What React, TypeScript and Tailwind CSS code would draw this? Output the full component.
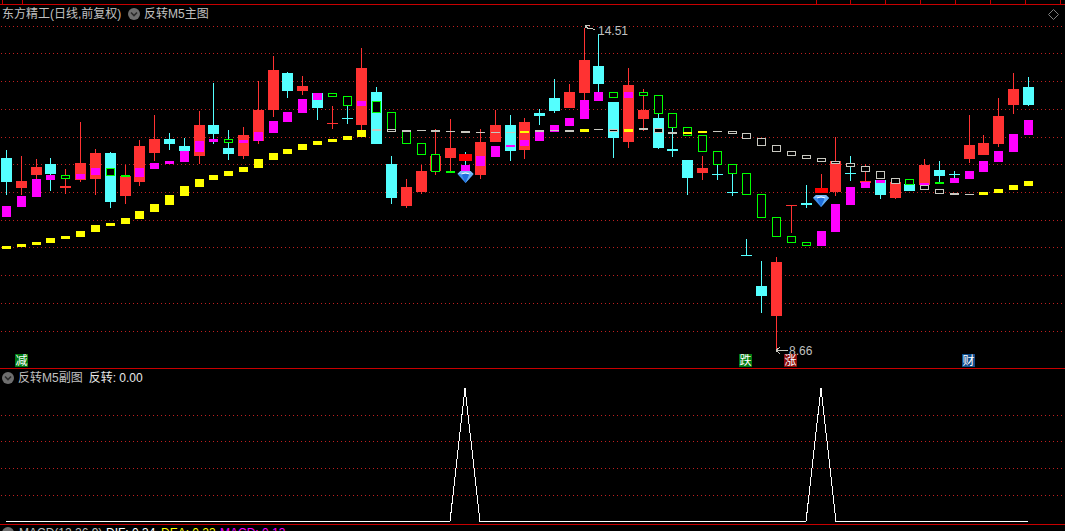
type Span = [number, number];

type Bar = {
  x: number;
  c: "r" | "c" | "n";
  w?: Span;
  b?: Span;
  m?: Span; // magenta block
  g?: Span; // green box
  y?: Span; // yellow dash
  s?: Span; // grey dash
  h?: Span; // grey box
  p?: Span; // pure red block
};

const bars: Bar[] = [
  { x: 6.5, c: "c", w: [150, 195], b: [158, 182], m: [206, 217], y: [246, 249] },
  { x: 21.5, c: "r", w: [156, 195], b: [181, 188], m: [196, 207], y: [244, 247] },
  { x: 36.5, c: "r", w: [159, 179], b: [167, 175], m: [179, 197], y: [242, 245] },
  { x: 50.5, c: "c", w: [158, 191], b: [164, 174], m: [175, 180], y: [238, 243] },
  { x: 65.5, c: "r", w: [169, 194], b: [186, 188], g: [175, 179], y: [236, 239] },
  { x: 80.5, c: "r", w: [122, 182], b: [163, 180], m: [174, 179], y: [231, 237] },
  { x: 95.5, c: "r", w: [149, 195], b: [153, 179], m: [168, 175], y: [225, 232] },
  { x: 110.5, c: "c", w: [152, 208], b: [153, 202], g: [168, 176], y: [223, 226] },
  { x: 125.5, c: "r", w: [165, 204], b: [176, 196], g: [175, 177], y: [218, 224] },
  { x: 139.5, c: "r", w: [140, 186], b: [146, 182], m: [168, 177], y: [211, 219] },
  { x: 154.5, c: "r", w: [115, 161], b: [139, 153], m: [163, 169], y: [204, 212] },
  { x: 169.5, c: "c", w: [133, 150], b: [139, 144], m: [161, 164], y: [195, 205] },
  { x: 184.5, c: "c", w: [138, 162], b: [146, 151], m: [151, 162], y: [186, 196] },
  { x: 199.5, c: "r", w: [111, 164], b: [125, 156], m: [141, 152], y: [179, 187] },
  { x: 213.5, c: "c", w: [83, 144], b: [125, 134], m: [139, 142], y: [175, 180] },
  { x: 228.5, c: "c", w: [130, 160], b: [148, 154], g: [139, 143], y: [171, 176] },
  { x: 243.5, c: "r", w: [127, 159], b: [135, 156], m: [140, 143], y: [167, 172] },
  { x: 258.5, c: "r", w: [81, 144], b: [110, 141], m: [132, 141], y: [159, 168] },
  { x: 273.5, c: "r", w: [56, 117], b: [70, 110], m: [121, 133], y: [153, 160] },
  { x: 287.5, c: "c", w: [72, 98], b: [73, 91], m: [112, 122], y: [149, 154] },
  { x: 302.5, c: "r", w: [76, 95], b: [86, 91], m: [99, 113], y: [144, 150] },
  { x: 317.5, c: "c", w: [93, 120], b: [93, 108], m: [93, 100], y: [141, 145] },
  { x: 332.5, c: "r", w: [106, 129], b: [123, 124], g: [93, 97], y: [139, 142] },
  { x: 347.5, c: "c", w: [96, 124], b: [118, 119], g: [96, 106], y: [136, 140] },
  { x: 361.5, c: "r", w: [48, 130], b: [68, 125], m: [101, 106], y: [130, 137] },
  { x: 376.5, c: "c", w: [87, 144], b: [92, 144], g: [101, 113], s: [129, 131] },
  { x: 391.5, c: "c", w: [156, 204], b: [164, 198], g: [112, 132], h: [129, 132] },
  { x: 406.5, c: "r", w: [179, 208], b: [187, 206], g: [131, 144], s: [130, 132] },
  { x: 421.5, c: "r", w: [165, 194], b: [171, 192], g: [143, 155], s: [130, 131] },
  { x: 435.5, c: "r", w: [129, 175], b: [156, 171], g: [154, 172], s: [130, 132] },
  { x: 450.5, c: "r", w: [119, 172], b: [148, 158], g: [171, 173], s: [131, 132] },
  { x: 465.5, c: "c", w: [152, 171], p: [154, 161], m: [165, 171], s: [131, 133] },
  { x: 480.5, c: "r", w: [129, 179], b: [142, 175], m: [156, 166], s: [132, 133] },
  { x: 495.5, c: "r", w: [110, 142], b: [125, 142], m: [146, 157], s: [132, 133] },
  { x: 510.5, c: "c", w: [115, 161], b: [125, 151], m: [145, 147], s: [132, 133] },
  { x: 524.5, c: "r", w: [118, 159], b: [122, 150], m: [140, 146], y: [131, 133] },
  { x: 539.5, c: "c", w: [109, 125], b: [113, 116], m: [132, 141], s: [130, 132] },
  { x: 554.5, c: "c", w: [79, 113], b: [98, 111], m: [125, 132], s: [130, 131] },
  { x: 569.5, c: "r", w: [84, 108], b: [92, 108], m: [118, 126], s: [130, 132] },
  { x: 584.5, c: "r", w: [28, 100], b: [60, 93], m: [100, 119], y: [129, 132] },
  { x: 598.5, c: "c", w: [34, 92], b: [66, 84], m: [92, 101], s: [129, 130] },
  { x: 613.5, c: "c", w: [102, 158], b: [102, 138], g: [92, 98], h: [129, 132] },
  { x: 628.5, c: "r", w: [68, 148], b: [85, 142], m: [92, 98], y: [129, 132] },
  { x: 643.5, c: "r", w: [89, 131], b: [110, 119], g: [92, 96], s: [128, 130] },
  { x: 658.5, c: "c", w: [114, 149], b: [118, 148], g: [95, 114], h: [128, 133] },
  { x: 672.5, c: "c", w: [128, 157], b: [149, 151], g: [113, 128], s: [132, 134] },
  { x: 687.5, c: "c", w: [160, 195], b: [160, 178], g: [127, 136], y: [132, 134] },
  { x: 702.5, c: "r", w: [156, 180], b: [168, 173], g: [135, 152], y: [131, 133] },
  { x: 717.5, c: "c", w: [165, 180], b: [174, 175], g: [151, 165], s: [131, 132] },
  { x: 732.5, c: "c", w: [174, 196], b: [192, 193], g: [164, 174], h: [131, 134] },
  { x: 746.5, c: "c", w: [239, 256], b: [255, 256], g: [173, 195], h: [133, 139] },
  { x: 761.5, c: "c", w: [261, 313], b: [286, 296], g: [194, 218], h: [138, 146] },
  { x: 776.5, c: "r", w: [257, 350], b: [262, 316], g: [217, 237], h: [145, 152] },
  { x: 791.5, c: "r", w: [205, 233], b: [205, 206], g: [236, 243], h: [151, 156] },
  { x: 806.5, c: "c", w: [185, 208], b: [203, 205], g: [242, 246], h: [155, 159] },
  { x: 821.5, c: "r", w: [174, 188], m: [231, 246], p: [188, 193], h: [158, 162] },
  { x: 835.5, c: "r", w: [137, 196], b: [161, 192], m: [204, 232], h: [161, 164] },
  { x: 850.5, c: "c", w: [156, 181], b: [173, 174], m: [187, 205], h: [163, 167] },
  { x: 865.5, c: "r", w: [164, 183], b: [181, 183], m: [182, 188], h: [166, 172] },
  { x: 880.5, c: "c", w: [180, 199], b: [180, 195], m: [180, 183], h: [171, 179] },
  { x: 895.5, c: "r", w: [182, 199], b: [182, 198], h: [178, 184] },
  { x: 909.5, c: "c", b: [184, 191], g: [179, 185] },
  { x: 924.5, c: "r", w: [159, 185], b: [165, 185], m: [183, 185], h: [185, 190] },
  { x: 939.5, c: "c", w: [161, 182], b: [170, 176], g: [182, 184], h: [189, 194] },
  { x: 954.5, c: "c", w: [171, 178], b: [174, 175], m: [178, 183], s: [193, 195] },
  { x: 969.5, c: "r", w: [115, 163], b: [145, 159], m: [171, 179], s: [194, 195] },
  { x: 983.5, c: "r", w: [135, 155], b: [143, 155], m: [161, 172], y: [192, 195] },
  { x: 998.5, c: "r", w: [98, 147], b: [116, 144], m: [151, 162], y: [189, 193] },
  { x: 1013.5, c: "r", w: [73, 114], b: [89, 105], m: [134, 152], y: [185, 190] },
  { x: 1028.5, c: "c", w: [77, 106], b: [87, 105], m: [120, 135], y: [181, 186] },
];

const mainGrid = [26, 53, 81, 109, 137, 164, 192, 220, 247, 275, 303, 331];
const subGrid = [415, 441, 468, 495];
const rulerTicks = [816, 850, 885, 920, 955, 990, 1025, 1060];

const RED = "#ff3232";
const CYAN = "#54ffff";
const GREY = "#c8c8c0";

function Block({ x, span, fill, half = 4.5 }: { x: number; span: Span; fill: string; half?: number }) {
  return <rect x={x - half} y={span[0]} width={half * 2} height={span[1] - span[0]} fill={fill} />;
}

function Box({ x, span, stroke }: { x: number; span: Span; stroke: string }) {
  if (span[1] - span[0] <= 2) return <Block x={x} span={span} fill={stroke} />;
  return (
    <rect
      x={x - 4}
      y={span[0] + 0.5}
      width={8}
      height={span[1] - span[0] - 1}
      fill="#000"
      stroke={stroke}
      strokeWidth={1}
    />
  );
}

function Gem({ x, y }: { x: number; y: number }) {
  return (
    <g transform={`translate(${x} ${y})`} shapeRendering="auto">
      <polygon points="0,3 3,0 13,0 16,3 8,12" fill="#3d8fec" />
      <polygon points="4,3 12,3 8,12" fill="#1f6fdc" />
      <polygon points="12,3 16,3 8,12" fill="#63aef5" />
      <polygon points="3,0 13,0 16,3 0,3" fill="#7cbcf7" />
      <path d="M4 3 Q8 0.6 12 3" fill="none" stroke="#fff" strokeWidth={1} />
    </g>
  );
}

function Toggle() {
  return (
    <svg width="12" height="12" viewBox="0 0 12 12" className="shrink-0">
      <circle cx="6" cy="6" r="6" fill="#6e6e6e" />
      <path d="M3 4.5 L6 7.5 L9 4.5" fill="none" stroke="#2a2a2a" strokeWidth="1.6" />
    </svg>
  );
}

function Badge({ left, bg, text }: { left: string; bg: string; text: string }) {
  return (
    <span className={`absolute top-[349px] ${left} ${bg} w-[13px] h-[13px] flex items-center justify-center text-[12px] leading-none text-white`}>
      {text}
    </span>
  );
}

export default function App() {
  return (
    <div className="w-[1065px] h-[531px] bg-black overflow-hidden flex flex-col font-['Liberation_Sans','Noto_Sans_CJK_SC',sans-serif] text-[12px] text-[#c0c0c0]">
      {/* top ruler */}
      <div className="h-[5px] shrink-0 border-b border-[#c80000] relative">
        <div className="absolute left-[2px] w-[21px] h-[4px] border-x border-[#c80000]" />
        {rulerTicks.map((t) => (
          <svg key={t} width="1" height="4" className="absolute top-0" style={{ left: t }}>
            <rect width="1" height="4" fill="#c80000" />
          </svg>
        ))}
      </div>

      {/* main chart */}
      <div className="h-[364px] shrink-0 border-b border-[#c80000] relative">
        <svg width="1065" height="363" viewBox="0 5 1065 363" shapeRendering="crispEdges" className="block">
          {mainGrid.map((y) => (
            <line key={y} x1="1" x2="1065" y1={y + 0.5} y2={y + 0.5} stroke="#c02020" strokeDasharray="1 3" />
          ))}
          {bars.map((d) => {
            const col = d.c === "r" ? RED : CYAN;
            return (
              <g key={d.x}>
                {d.w && <rect x={Math.floor(d.x)} y={d.w[0]} width="1" height={d.w[1] - d.w[0]} fill={col} />}
                {d.b && <Block x={d.x} span={d.b} fill={col} half={5.5} />}
                {d.p && <Block x={d.x} span={d.p} fill="#ff0000" half={6.5} />}
                {d.m && <Block x={d.x} span={d.m} fill="#ff00ff" />}
                {d.g && <Box x={d.x} span={d.g} stroke="#00ff00" />}
                {d.y && <Block x={d.x} span={d.y} fill="#ffff00" />}
                {d.s && <Block x={d.x} span={d.s} fill={GREY} />}
                {d.h && <Box x={d.x} span={d.h} stroke={GREY} />}
              </g>
            );
          })}
          <Gem x={457.5} y={171} />
          <Gem x={813} y={195} />
          {/* high / low arrows */}
          <path d="M590 25 L585 25 L585 28 M585 25 L588 29 L591 28 L595 30" fill="none" stroke={GREY} />
          <path d="M776 350.5 H788 M776 350.5 L780 347 M776 350.5 L780 354" fill="none" stroke={GREY} />
          {/* corner diamond */}
          <polygon points="1053.5,9.5 1058.5,14.5 1053.5,19.5 1048.5,14.5" fill="none" stroke="#808080" shapeRendering="auto" />
        </svg>

        <div className="absolute top-px left-[2px] h-4 flex items-center">
          <span className="w-[120px] whitespace-nowrap">东方精工(日线,前复权)</span>
          <span className="ml-[6px] mr-[4px]">
            <Toggle />
          </span>
          <span>反转M5主图</span>
        </div>
        <span className="absolute left-[598px] top-[19px] leading-[14px]">14.51</span>
        <span className="absolute left-[789px] top-[339px] leading-[14px]">8.66</span>
        <Badge left="left-[15px]" bg="bg-[#007a10]" text="减" />
        <Badge left="left-[739px]" bg="bg-[#007a10]" text="跌" />
        <Badge left="left-[784px]" bg="bg-[#8a0c0c]" text="涨" />
        <Badge left="left-[962px]" bg="bg-[#0f4c8a]" text="财" />
      </div>

      {/* sub chart */}
      <div className="h-[156px] shrink-0 border-b border-[#c80000] relative">
        <svg width="1065" height="155" viewBox="0 369 1065 155" shapeRendering="crispEdges" className="block">
          {subGrid.map((y) => (
            <line key={y} x1="1" x2="1065" y1={y + 0.5} y2={y + 0.5} stroke="#c02020" strokeDasharray="1 3" />
          ))}
          <polyline
            points="6,521.5 450,521.5 465,388 480,521.5 806,521.5 821,388 836,521.5 1028,521.5"
            fill="none"
            stroke="#fff"
            strokeWidth="1"
          />
        </svg>
        <div className="absolute top-0 left-[2px] h-[17px] flex items-center">
          <Toggle />
          <span className="ml-[4px]">反转M5副图</span>
          <span className="ml-[6px] text-[#e8e8e8]">反转: 0.00</span>
        </div>
      </div>

      {/* macd strip, cut off by the window */}
      <div className="h-[6px] shrink-0 overflow-hidden relative">
        <div className="absolute top-0 left-[2px] flex items-center h-4">
          <Toggle />
          <span className="ml-[5px] w-[87px] whitespace-nowrap">MACD(12,26,9)</span>
          <span className="w-[55px] text-white whitespace-nowrap">DIF: 0.34</span>
          <span className="w-[59px] text-[#ffff00] whitespace-nowrap">DEA: 0.23</span>
          <span className="text-[#ff00ff] whitespace-nowrap">MACD: 0.13</span>
        </div>
      </div>
    </div>
  );
}
